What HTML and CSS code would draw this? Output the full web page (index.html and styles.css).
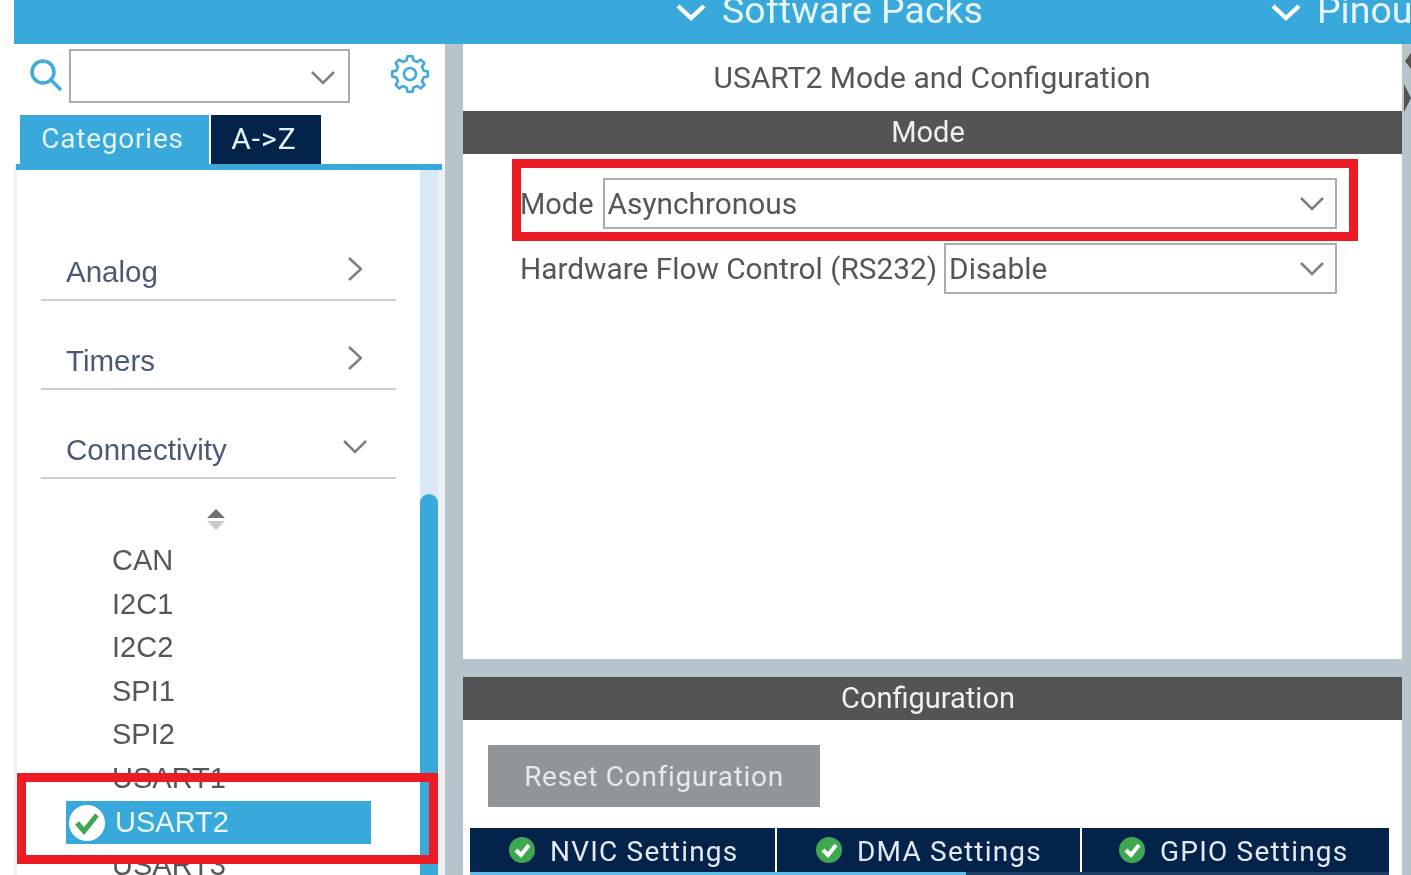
FILE: index.html
```html
<!DOCTYPE html>
<html lang="en">
<head>
<meta charset="utf-8">
<title>USART2 Mode and Configuration</title>
<link rel="stylesheet" href="styles.css">
</head>
<body>
<div class="app">
  <header class="topbar">
    <div class="menu menu-packs">
      <svg class="menu-chev" viewBox="0 0 30 18"><path d="M2 3 L15 15 L28 3"/></svg>
      <span>Software Packs</span>
    </div>
    <div class="menu menu-pinout">
      <svg class="menu-chev" viewBox="0 0 30 18"><path d="M2 3 L15 15 L28 3"/></svg>
      <span>Pinout</span>
    </div>
  </header>
  <div class="workspace">
    <aside class="left">
      <div class="searchrow">
        <svg class="search" viewBox="0 0 34 34"><circle cx="14" cy="14" r="11"/><path d="M22 22 L31 31"/></svg>
        <div class="combo">
          <svg class="chev" viewBox="0 0 24 14"><path d="M1 1 L12 12 L23 1"/></svg>
        </div>
        <svg class="gear" viewBox="0 0 40 40">
          <circle cx="20" cy="20" r="6"/>
          <path d="M16.61 6.42 L17.5 2.18 L22.5 2.18 L23.39 6.42 L27.21 8 L30.83 5.62 L34.38 9.17 L32 12.79 L33.58 16.61 L37.82 17.5 L37.82 22.5 L33.58 23.39 L32 27.21 L34.38 30.83 L30.83 34.38 L27.21 32 L23.39 33.58 L22.5 37.82 L17.5 37.82 L16.61 33.58 L12.79 32 L9.17 34.38 L5.62 30.83 L8 27.21 L6.42 23.39 L2.18 22.5 L2.18 17.5 L6.42 16.61 L8 12.79 L5.62 9.17 L9.17 5.62 L12.79 8 Z"/>
        </svg>
      </div>
      <div class="tabs">
        <div class="tab tab-on">Categories</div>
        <div class="tab tab-off">A-&gt;Z</div>
      </div>
      <div class="treewrap">
        <div class="tree">
          <div class="cat cat-first"><span>Analog</span><svg class="cat-right" viewBox="0 0 14 24"><path d="M1 1 L13 12 L1 23"/></svg></div>
          <div class="cat"><span>Timers</span><svg class="cat-right" viewBox="0 0 14 24"><path d="M1 1 L13 12 L1 23"/></svg></div>
          <div class="cat"><span>Connectivity</span><svg class="cat-down" viewBox="0 0 24 14"><path d="M1 1 L12 12 L23 1"/></svg></div>
          <div class="sorter"><i class="up"></i><i class="down"></i></div>
          <ul class="items">
            <li>CAN</li>
            <li>I2C1</li>
            <li>I2C2</li>
            <li>SPI1</li>
            <li>SPI2</li>
            <li>USART1</li>
            <li class="selected">
              <svg class="okicon" viewBox="0 0 38 38"><circle cx="19" cy="19" r="18"/><path d="M9 19 L16 27 L29 11"/></svg>
              <span>USART2</span>
            </li>
            <li>USART3</li>
          </ul>
        </div>
        <div class="scroll"><div class="thumb"></div></div>
        <div class="scrollpad"></div>
      </div>
    </aside>
    <main class="right">
      <section class="modepanel">
        <h1 class="title">USART2 Mode and Configuration</h1>
        <div class="bar">Mode</div>
        <div class="form">
          <div class="row">
            <label class="lab lab-mode">Mode</label>
            <div class="sel sel-mode"><span>Asynchronous</span><svg class="chev" viewBox="0 0 24 14"><path d="M1 1 L12 12 L23 1"/></svg></div>
          </div>
          <div class="row">
            <label class="lab">Hardware Flow Control (RS232)</label>
            <div class="sel sel-flow"><span>Disable</span><svg class="chev" viewBox="0 0 24 14"><path d="M1 1 L12 12 L23 1"/></svg></div>
          </div>
        </div>
      </section>
      <section class="configpanel">
        <div class="bar">Configuration</div>
        <button class="reset" type="button">Reset Configuration</button>
        <div class="ctabs">
          <div class="ctab ctab-a"><svg class="tabok" viewBox="0 0 28 28"><circle cx="14" cy="14" r="13"/><path d="M8 14 L13 19 L21 9"/></svg><span>NVIC Settings</span></div>
          <div class="ctab ctab-b"><svg class="tabok" viewBox="0 0 28 28"><circle cx="14" cy="14" r="13"/><path d="M8 14 L13 19 L21 9"/></svg><span>DMA Settings</span></div>
          <div class="ctab ctab-c"><svg class="tabok" viewBox="0 0 28 28"><circle cx="14" cy="14" r="13"/><path d="M8 14 L13 19 L21 9"/></svg><span>GPIO Settings</span></div>
        </div>
        <div class="ctabline"><div class="ctabline-on"></div></div>
      </section>
    </main>
    <div class="edge">
      <i class="arrow-l"></i>
      <i class="arrow-r"></i>
    </div>
  </div>
  <div class="redbox redbox-mode"></div>
  <div class="redbox redbox-usart"></div>
</div>
</body>
</html>
```
FILE: styles.css
```css
* { box-sizing: border-box; }
html, body { margin: 0; padding: 0; height: 875px; overflow: hidden; background: #fff; }
body { font-family: "Liberation Sans", Arial, sans-serif; color: #53565a; }
.app { position: relative; width: 1411px; height: 875px; padding-left: 14px; overflow: hidden; filter: blur(0.7px); background: #fff; }

.topbar { height: 44px; background: #39a9dc; display: flex; align-items: flex-start; overflow: hidden; color: #e8f6fc; font-family: Roboto, sans-serif; font-size: 37.5px; line-height: 40px; white-space: nowrap; }
.menu { display: flex; align-items: flex-start; gap: 16px; height: 44px; margin-top: -10px; flex: none; }
.menu-packs { margin-left: 662px; }
.menu-pinout { margin-left: 288px; }
.menu-chev { width: 30px; height: 18px; fill: none; stroke: #fff; stroke-width: 4.4; margin-top: 13px; }

.workspace { display: flex; height: 831px; }
.left { width: 431px; flex: none; display: flex; flex-direction: column; }
.searchrow { height: 71px; display: flex; align-items: flex-start; }
.search { width: 34px; height: 34px; margin: 14px 0 0 15px; fill: none; stroke: #3fabdd; stroke-width: 3.5; stroke-linecap: round; }
.combo { width: 281px; height: 54px; margin: 5px 0 0 6px; border: 2px solid #a9adb0; display: flex; align-items: center; justify-content: flex-end; padding: 4px 13px 0 0; }
.chev { width: 24px; height: 14px; fill: none; stroke: #7d8083; stroke-width: 2.6; flex: none; }
.gear { width: 40px; height: 40px; margin: 10px 0 0 40px; fill: none; stroke: #3fabdd; stroke-width: 2.6; stroke-linejoin: round; }

.tabs { height: 49px; display: flex; padding-left: 6px; gap: 2px; font-family: Roboto, sans-serif; font-size: 28px; color: #e4f3fb; }
.tab { display: flex; align-items: center; justify-content: center; }
.tab-on { width: 189px; background: #39a9dc; letter-spacing: .8px; padding: 0 4px 2px 0; }
.tab-off { width: 110px; background: #04234b; padding: 0 4px 2px 0; font-size: 30px; letter-spacing: 1px; }

.treewrap { flex: 1; min-height: 0; display: flex; border-left: 3px solid #eef1f4; position: relative; }
.treewrap::before { content: ""; position: absolute; left: -1px; top: 0; width: 426px; height: 6px; background: #39a9dc; z-index: 1; }
.tree { width: 403px; flex: none; padding-top: 6px; overflow: hidden; }
.scroll { width: 18px; flex: none; background: #d8e8f6; padding-top: 324px; margin-top: 6px; }
.thumb { height: 500px; background: #39a9dc; border-radius: 9px 9px 0 0; }
.scrollpad { flex: 1; background: #eef1f4; margin-top: 6px; }

.cat { margin: 0 24px; height: 89px; border-bottom: 2px solid #c8d0d6; display: flex; align-items: flex-end; justify-content: space-between; font-size: 29.5px; padding: 0 0 10px 25px; color: #4a5a75; }
.cat-first { height: 131px; }
.cat-right { width: 14px; height: 24px; fill: none; stroke: #7d8083; stroke-width: 2.6; margin: 0 34px 8px 0; }
.cat-down { width: 24px; height: 14px; fill: none; stroke: #7d8083; stroke-width: 2.6; margin: 0 29px 13px 0; }

.sorter { height: 60px; display: flex; flex-direction: column; align-items: center; padding: 30px 0 0 0; gap: 3px; width: 398px; }
.up, .down { display: block; width: 0; height: 0; border-left: 9px solid transparent; border-right: 9px solid transparent; }
.up { border-bottom: 9px solid #6d7074; }
.down { border-top: 9px solid #c6c8ca; }

.items { list-style: none; margin: 0; padding: 0 0 0 49px; font-size: 29px; color: #53565a; }
.items li { height: 43.5px; line-height: 43.5px; padding-left: 46px; }
.items .selected { background: #39a9dc; color: #e8f6fc; width: 305px; height: 43px; display: flex; align-items: center; padding-left: 2px; gap: 9px; margin-top: 1px; }
.okicon { width: 38px; height: 38px; flex: none; }
.okicon circle { fill: #fff; }
.okicon path { fill: none; stroke: #3fa652; stroke-width: 5; }

.right { width: 957px; flex: none; display: flex; flex-direction: column; background: #b8c4cc; border-left: 18px solid #b8c4cc; }
.modepanel { height: 615px; background: #fff; }
.title { margin: 0; height: 67px; font-weight: 400; font-size: 30px; text-align: center; line-height: 67px; color: #53565a; font-family: Roboto, sans-serif; padding-right: 1px; }
.bar { height: 43px; background: #535453; color: #f0f2f2; font-size: 29px; line-height: 43px; text-align: center; font-family: Roboto, sans-serif; padding-right: 9px; }
.form { padding: 24px 0 0 57px; display: flex; flex-direction: column; gap: 14px; }
.row { display: flex; align-items: center; height: 51px; font-size: 29.8px; }
.lab { white-space: nowrap; font-family: Roboto, sans-serif; }
.lab-mode { font-size: 29px; }
.sel { height: 51px; border: 2px solid #a9adb0; display: flex; align-items: center; justify-content: space-between; padding: 0 11px 0 3px; }
.sel-mode { width: 734px; margin-left: 9px; }
.sel-flow { width: 393px; margin-left: 7px; }
.sel span { font-family: Roboto, sans-serif; }

.configpanel { margin-top: 18px; flex: 1; background: #fff; overflow: hidden; }
.reset { display: block; margin: 25px 0 0 25px; width: 332px; height: 62px; border: 0; background: #90959a; color: #e6e8ea; font-family: Roboto, sans-serif; font-size: 28px; letter-spacing: .7px; padding: 0; }
.ctabs { margin: 21px 0 0 7px; width: 919px; height: 44px; display: flex; gap: 2px; background: #fff; }
.ctab { background: #04234b; color: #e4e9f0; font-family: Roboto, sans-serif; font-size: 28px; display: flex; align-items: center; gap: 14px; letter-spacing: 1.2px; padding-top: 3px; }
.ctab-a { width: 305px; padding-left: 38px; }
.ctab-b { width: 303px; padding-left: 38px; }
.ctab-c { flex: 1; padding-left: 36px; }
.tabok { width: 28px; height: 28px; flex: none; margin-top: -3px; }
.tabok circle { fill: #3fa652; }
.tabok path { fill: none; stroke: #fff; stroke-width: 4; }
.ctabline { margin: 0 0 0 7px; width: 919px; height: 3px; background: #1f3f66; }
.ctabline-on { width: 496px; height: 3px; background: #5bbfe8; }

.edge { flex: 1; background: #b8c4cc; display: flex; flex-direction: column; align-items: flex-end; padding-top: 9px; overflow: hidden; }
.arrow-l { display: block; width: 0; height: 0; border-top: 8px solid transparent; border-bottom: 8px solid transparent; border-right: 6px solid #535453; }
.arrow-r { display: block; width: 0; height: 0; border-top: 14px solid transparent; border-bottom: 14px solid transparent; border-left: 7px solid #535453; margin: 15px 0 0 0; }

.redbox { position: absolute; border: 9px solid #ed1c24; }
.redbox-mode { left: 512px; top: 159px; width: 846px; height: 82px; }
.redbox-usart { left: 17px; top: 773px; width: 421px; height: 91px; }
```
